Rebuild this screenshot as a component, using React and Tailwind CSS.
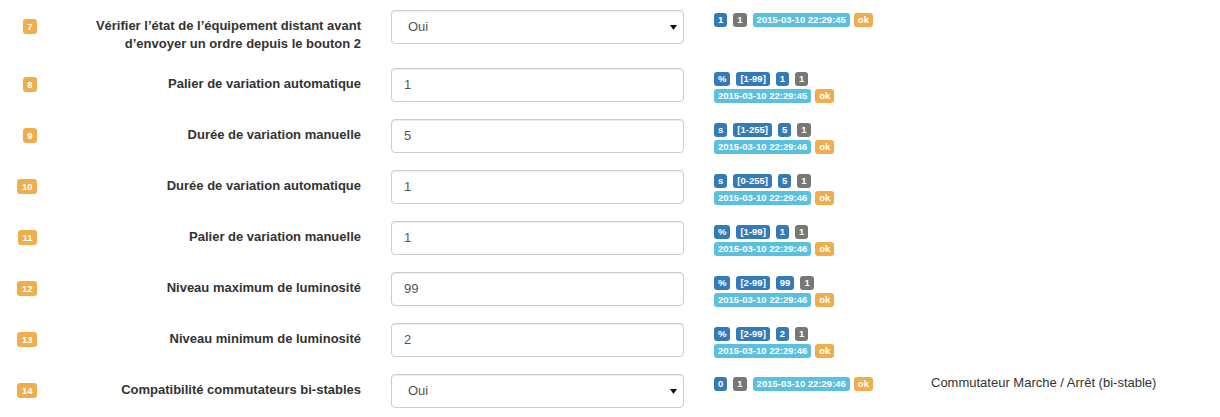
import React from "react";

const B = ({ c, children }) => {
  const colors = {
    p: "bg-[#337ab7]",
    d: "bg-[#777777]",
    i: "bg-[#5bc0de]",
    w: "bg-[#f0ad4e]",
  };
  return (
    <span
      className={`${colors[c]} inline-flex items-center justify-center h-[14px] px-[4px] rounded-[3px] text-white text-[9.5px] font-bold leading-none whitespace-nowrap`}
    >
      {children}
    </span>
  );
};

const TsOk = ({ ts }) => (
  <div className="flex gap-[4px]">
    <B c="i">{ts}</B>
    <B c="w">ok</B>
  </div>
);

const Field = ({ value, select }) => (
  <div
    className={`relative w-[293px] h-[34px] border border-[#cccccc] rounded-[4px] bg-white shadow-[inset_0_1px_1px_rgba(0,0,0,0.075)] flex items-center text-[13px] text-[#555555] ${
      select ? "pl-[16px]" : "pl-[12px]"
    }`}
  >
    {value}
    {select && (
      <svg
        className="absolute right-[6px] top-[14px]"
        width="7"
        height="5"
        viewBox="0 0 7 5"
      >
        <path d="M0 0 L7 0 L3.5 5 Z" fill="#111" />
      </svg>
    )}
  </div>
);

const rows = [
  {
    n: "7",
    label: (
      <>
        Vérifier l’état de l’équipement distant avant
        <br />
        d’envoyer un ordre depuis le bouton 2
      </>
    ),
    value: "Oui",
    select: true,
    single: [["p", "1"], ["d", "1"]],
    ts: "2015-03-10 22:29:45",
    tall: true,
  },
  {
    n: "8",
    label: "Palier de variation automatique",
    value: "1",
    line1: [["p", "%"], ["p", "[1-99]"], ["p", "1"], ["d", "1"]],
    ts: "2015-03-10 22:29:45",
  },
  {
    n: "9",
    label: "Durée de variation manuelle",
    value: "5",
    line1: [["p", "s"], ["p", "[1-255]"], ["p", "5"], ["d", "1"]],
    ts: "2015-03-10 22:29:46",
  },
  {
    n: "10",
    label: "Durée de variation automatique",
    value: "1",
    line1: [["p", "s"], ["p", "[0-255]"], ["p", "5"], ["d", "1"]],
    ts: "2015-03-10 22:29:46",
  },
  {
    n: "11",
    label: "Palier de variation manuelle",
    value: "1",
    line1: [["p", "%"], ["p", "[1-99]"], ["p", "1"], ["d", "1"]],
    ts: "2015-03-10 22:29:46",
  },
  {
    n: "12",
    label: "Niveau maximum de luminosité",
    value: "99",
    line1: [["p", "%"], ["p", "[2-99]"], ["p", "99"], ["d", "1"]],
    ts: "2015-03-10 22:29:46",
  },
  {
    n: "13",
    label: "Niveau minimum de luminosité",
    value: "2",
    line1: [["p", "%"], ["p", "[2-99]"], ["p", "2"], ["d", "1"]],
    ts: "2015-03-10 22:29:46",
  },
  {
    n: "14",
    label: "Compatibilité commutateurs bi-stables",
    value: "Oui",
    select: true,
    single: [["p", "0"], ["d", "1"]],
    ts: "2015-03-10 22:29:46",
    desc: "Commutateur Marche / Arrêt (bi-stable)",
  },
];

export default function App() {
  return (
    <div
      className="w-[1220px] h-[417px] bg-white pt-[10px] overflow-hidden"
      style={{ fontFamily: "'Liberation Sans', Arial, sans-serif" }}
    >
      {rows.map((r) => (
        <div
          key={r.n}
          className={`flex items-start mb-[15px] ${r.tall ? "h-[43px]" : "h-[36px]"}`}
        >
          <div className="w-[52px] pr-[15px] pt-[9px] flex justify-end">
            <span className="inline-flex items-center justify-center h-[15px] px-[4.5px] rounded-[3px] bg-[#f0ad4e] text-white text-[9.5px] font-bold leading-none">
              {r.n}
            </span>
          </div>
          <div className="w-[324px] px-[15px] pt-[7px] text-right text-[13px] leading-[18px] font-bold text-[#333333]">
            {r.label}
          </div>
          <div className="w-[323px] px-[15px]">
            <Field value={r.value} select={r.select} />
          </div>
          <div className="w-[217px] px-[15px] pt-[3px]">
            {r.single ? (
              <div className="flex gap-[6px]">
                {r.single.map(([c, t], i) => (
                  <B key={i} c={c}>
                    {t}
                  </B>
                ))}
                <TsOk ts={r.ts} />
              </div>
            ) : (
              <div className="flex flex-col gap-[3px] pt-[1px]">
                <div className="flex gap-[6px]">
                  {r.line1.map(([c, t], i) => (
                    <B key={i} c={c}>
                      {t}
                    </B>
                  ))}
                </div>
                <TsOk ts={r.ts} />
              </div>
            )}
          </div>
          {r.desc && (
            <div className="px-[15px] text-[13px] leading-[18px] text-[#333333]">
              {r.desc}
            </div>
          )}
        </div>
      ))}
    </div>
  );
}
